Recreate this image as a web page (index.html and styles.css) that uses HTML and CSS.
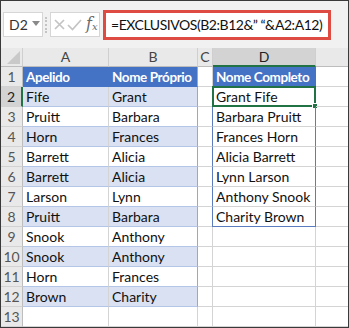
FILE: index.html
```html
<!DOCTYPE html>
<html>
<head>
<meta charset="utf-8">
<link rel="stylesheet" href="styles.css">
</head>
<body>
<div class="frame">
  <div class="toolbar">
    <div class="namebox"><span class="ref">D2</span><span class="caret"></span></div>
    <div class="sep"></div>
    <div class="fxbox">
      <svg class="ico" width="32" height="16" viewBox="0 0 32 16">
        <path d="M2 3 L11 12 M11 3 L2 12" stroke="#c4c4c4" stroke-width="1.7" fill="none"/>
        <path d="M15 8 L19.5 12.5 L28 3" stroke="#c4c4c4" stroke-width="1.7" fill="none"/>
      </svg>
      <span class="fx">f<sub>x</sub></span>
    </div>
    <div class="formula">=EXCLUSIVOS(B2:B12&amp;” “&amp;A2:A12)</div>
  </div>
  <div class="sheet">
    <div class="hd corner"><span class="tri"></span></div>
    <div class="hd">A</div>
    <div class="hd">B</div>
    <div class="hd">C</div>
    <div class="hd sel">D</div>
    <div class="hd last"></div>

    <div class="rh">1</div>
    <div class="c th">Apelido</div>
    <div class="c th bl">Nome Próprio</div>
    <div class="c"></div>
    <div class="c th dhead">Nome Completo</div>
    <div class="c last"></div>

    <div class="rh rsel">2</div>
    <div class="c band">Fife</div>
    <div class="c band bl">Grant</div>
    <div class="c"></div>
    <div class="c sp active">Grant Fife<span class="handle"></span></div>
    <div class="c last"></div>

    <div class="rh">3</div>
    <div class="c tw">Pruitt</div>
    <div class="c tw bl">Barbara</div>
    <div class="c"></div>
    <div class="c sp">Barbara Pruitt</div>
    <div class="c last"></div>

    <div class="rh">4</div>
    <div class="c band">Horn</div>
    <div class="c band bl">Frances</div>
    <div class="c"></div>
    <div class="c sp">Frances Horn</div>
    <div class="c last"></div>

    <div class="rh">5</div>
    <div class="c tw">Barrett</div>
    <div class="c tw bl">Alicia</div>
    <div class="c"></div>
    <div class="c sp">Alicia Barrett</div>
    <div class="c last"></div>

    <div class="rh">6</div>
    <div class="c band">Barrett</div>
    <div class="c band bl">Alicia</div>
    <div class="c"></div>
    <div class="c sp">Lynn Larson</div>
    <div class="c last"></div>

    <div class="rh">7</div>
    <div class="c tw">Larson</div>
    <div class="c tw bl">Lynn</div>
    <div class="c"></div>
    <div class="c sp">Anthony Snook</div>
    <div class="c last"></div>

    <div class="rh">8</div>
    <div class="c band">Pruitt</div>
    <div class="c band bl">Barbara</div>
    <div class="c"></div>
    <div class="c sp spend">Charity Brown</div>
    <div class="c last"></div>

    <div class="rh">9</div>
    <div class="c tw">Snook</div>
    <div class="c tw bl">Anthony</div>
    <div class="c"></div>
    <div class="c"></div>
    <div class="c last"></div>

    <div class="rh">10</div>
    <div class="c band">Snook</div>
    <div class="c band bl">Anthony</div>
    <div class="c"></div>
    <div class="c"></div>
    <div class="c last"></div>

    <div class="rh">11</div>
    <div class="c tw">Horn</div>
    <div class="c tw bl">Frances</div>
    <div class="c"></div>
    <div class="c"></div>
    <div class="c last"></div>

    <div class="rh">12</div>
    <div class="c band">Brown</div>
    <div class="c band bl">Charity</div>
    <div class="c"></div>
    <div class="c"></div>
    <div class="c last"></div>

    <div class="rh">13</div>
    <div class="c"></div>
    <div class="c"></div>
    <div class="c"></div>
    <div class="c"></div>
    <div class="c last"></div>
  </div>
</div>
</body>
</html>
```
FILE: styles.css
```css
* { box-sizing: border-box; }
html, body { margin: 0; padding: 0; background: #fff; }
body { font-family: Lato, "Liberation Sans", sans-serif; }

.frame {
  width: 349px;
  height: 328px;
  border: 1px solid #3a3a3a;
  overflow: hidden;
  display: flex;
  flex-direction: column;
}

.toolbar {
  height: 47px;
  flex: none;
  background: #f1f1f1;
  display: flex;
  align-items: center;
  padding-left: 2px;
}
.namebox {
  width: 40px;
  height: 25px;
  background: #fff;
  border: 1px solid #d6d6d6;
  display: flex;
  align-items: center;
  padding-left: 5px;
  font-size: 14px;
  color: #333;
}
.caret {
  margin-left: 4px;
  width: 0; height: 0;
  border-left: 4px solid transparent;
  border-right: 4px solid transparent;
  border-top: 5px solid #8a8a8a;
  margin-top: -2px;
}
.sep {
  width: 0;
  height: 16px;
  margin: 0 3px 0 2px;
  border-left: 2px dotted #c4c4c4;
}
.fxbox {
  width: 50px;
  height: 25px;
  background: #fff;
  border: 1px solid #d6d6d6;
  display: flex;
  align-items: center;
  padding-left: 2px;
  position: relative;
}
.ico { display: block; }
.fx {
  position: absolute;
  left: 35px;
  top: 1px;
  font-family: "DejaVu Serif", "Liberation Serif", serif;
  font-style: italic;
  font-size: 16px;
  color: #6a6a6a;
}
.fx sub { font-size: 10px; vertical-align: -1px; }
.formula {
  margin-left: 3px;
  width: 228px;
  height: 30px;
  background: #fff;
  border: 3px solid #dd4b43;
  display: flex;
  align-items: center;
  padding-left: 5px;
  font-size: 14px;
  letter-spacing: -0.45px;
  color: #111;
  white-space: nowrap;
}

.sheet {
  flex: 1;
  display: grid;
  grid-template-columns: 22px 86px 89px 15px 103px 1fr;
  grid-template-rows: 19px repeat(13, 20px);
  font-size: 14px;
}
.hd {
  background: #e9e9e9;
  border-right: 1px solid #cfcfcf;
  border-bottom: 1px solid #bdbdbd;
  color: #444;
  font-size: 14px;
  display: flex;
  align-items: center;
  justify-content: center;
  line-height: 1;
}
.hd.sel {
  background: #d3d3d3;
  border-bottom: 2px solid #217346;
  color: #222;
}
.hd.last { border-right: none; }
.corner { position: relative; }
.tri {
  position: absolute;
  right: 2px;
  bottom: 2px;
  width: 0; height: 0;
  border-left: 13px solid transparent;
  border-bottom: 13px solid #c9c9c9;
}
.rh {
  background: #e9e9e9;
  border-right: 1px solid #bdbdbd;
  border-bottom: 1px solid #d2d2d2;
  color: #555;
  font-size: 14px;
  display: flex;
  align-items: flex-end;
  justify-content: center;
  padding-bottom: 2px;
  line-height: 1;
}
.rh.rsel {
  background: #d3d3d3;
  border-right: 2px solid #217346;
  color: #222;
}
.c {
  border-right: 1px solid #d4d4d4;
  border-bottom: 1px solid #d4d4d4;
  padding: 0 0 2px 3px;
  display: flex;
  align-items: flex-end;
  white-space: nowrap;
  line-height: 1;
  color: #111;
  position: relative;
}
.c.last { border-right: none; }
.th {
  background: #4472c4;
  color: #fff;
  font-weight: bold;
  font-size: 13.5px;
  letter-spacing: -0.4px;
  border-right-color: #4472c4;
  border-bottom-color: #4472c4;
}
.th.bl { border-right-color: #8ea9db; }
.band {
  background: #d9e1f2;
  border-bottom-color: #b4c6e7;
}
.tw { border-bottom-color: #b4c6e7; }
.bl { border-right-color: #8ea9db; }
.dhead { border-right-color: #4472c4; }
.sp {
  border-left: 1px solid #5b7dc0;
  border-right: 1px solid #5b7dc0;
  margin-left: -1px;
}
.spend { border-bottom: 1px solid #5b7dc0; }
.active {
  border: 2px solid #217346;
  margin-left: -1px;
  margin-top: -1px;
  padding-left: 2px;
  padding-bottom: 1px;
}
.handle {
  position: absolute;
  right: -4px;
  bottom: -4px;
  width: 6px;
  height: 6px;
  background: #217346;
  border: 1px solid #fff;
}
```
